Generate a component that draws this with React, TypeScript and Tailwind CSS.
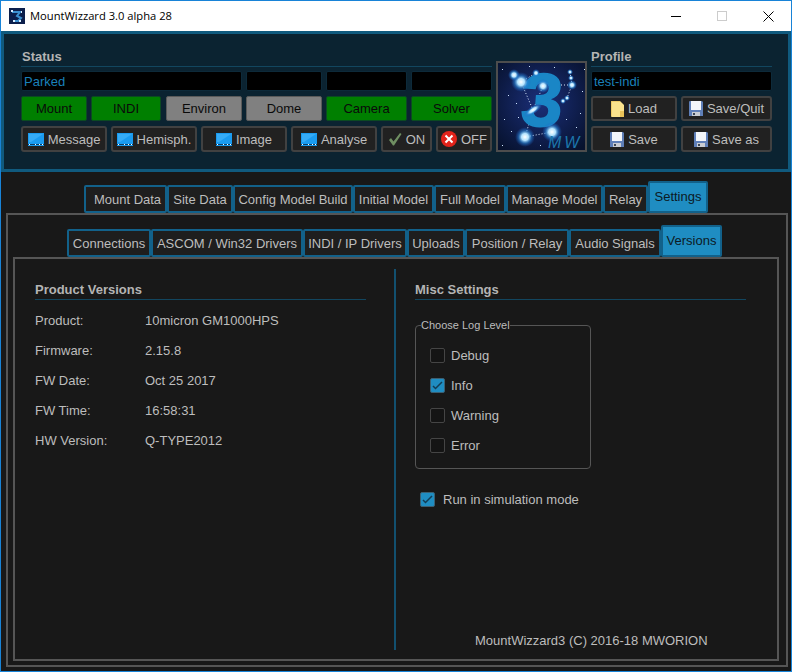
import { ReactNode } from "react";

const mainTabs = [
  { label: "Mount Data", width: "w-[83px] pl-[4px]" },
  { label: "Site Data", width: "w-[66px]" },
  { label: "Config Model Build", width: "w-[120px]" },
  { label: "Initial Model", width: "w-[81px]" },
  { label: "Full Model", width: "w-[72px]" },
  { label: "Manage Model", width: "w-[97px]" },
  { label: "Relay", width: "w-[45px]" },
];

const subTabs = [
  { label: "Connections", width: "w-[84px]" },
  { label: "ASCOM / Win32 Drivers", width: "w-[152px]" },
  { label: "INDI / IP Drivers", width: "w-[104px]" },
  { label: "Uploads", width: "w-[58px]" },
  { label: "Position / Relay", width: "w-[104px]" },
  { label: "Audio Signals", width: "w-[92px]" },
];

const versions = [
  ["Product:", "10micron GM1000HPS"],
  ["Firmware:", "2.15.8"],
  ["FW Date:", "Oct 25 2017"],
  ["FW Time:", "16:58:31"],
  ["HW Version:", "Q-TYPE2012"],
];

const stars = [
  [25, 21, 10],
  [18, 14, 6],
  [40, 12, 4],
  [47, 25, 7],
  [29, 76, 10],
  [56, 71, 10],
  [74, 11, 3],
  [76, 24, 5],
  [75, 17, 3],
  [71, 37, 3],
  [67, 40, 3],
];

const specks = [
  [6, 8], [12, 34], [8, 58], [20, 42], [33, 5], [58, 6], [86, 30], [84, 52], [70, 58],
  [15, 70], [44, 84], [6, 84], [62, 46], [80, 66], [36, 64], [52, 16], [22, 56], [88, 8],
];

function WindowIcon() {
  return (
    <svg width="16" height="13" viewBox="0 0 16 13" className="shrink-0">
      <rect width="16" height="13" fill="#1a9bf0" />
      <path d="M1 1H15L3 9H1Z" fill="#35abf6" />
      <rect x="0" y="11" width="16" height="1" fill="#0b3f66" />
      <rect x="1" y="11" width="1" height="1" fill="#fff" />
      <rect x="7" y="11" width="1" height="1" fill="#fff" />
      <rect x="11" y="11" width="1" height="1" fill="#fff" />
      <rect x="14" y="11" width="1" height="1" fill="#fff" />
    </svg>
  );
}

function FloppyIcon() {
  return (
    <svg width="14" height="15" viewBox="0 0 14 15" className="shrink-0">
      <path d="M0 1Q0 0 1 0H13L14 1V15H0Z" fill="#5f7fb8" />
      <rect x="2" y="0" width="10" height="9" fill="#f4f6fa" />
      <rect x="3" y="11" width="8" height="4" fill="#c9ccd2" />
      <rect x="4" y="12" width="2" height="2" fill="#3c4656" />
    </svg>
  );
}

function FolderIcon() {
  return (
    <svg width="13" height="16" viewBox="0 0 13 16" className="shrink-0">
      <path d="M0 1Q0 0 1 0H9L13 4V16H1Q0 16 0 15Z" fill="#fbe38d" />
      <path d="M9 10H13V16H9Z" fill="#e9c35a" />
      <path d="M0 1Q0 0 1 0H9V1H1V15H0Z" fill="#f0cc69" />
    </svg>
  );
}

function CheckIcon() {
  return (
    <svg width="14" height="14" viewBox="0 0 14 14" className="shrink-0">
      <path d="M1 8L3 6L5.5 9.5L12 1L13.5 2L6 13.5H5Z" fill="#6f8f62" />
    </svg>
  );
}

function CrossIcon() {
  return (
    <svg width="16" height="16" viewBox="0 0 16 16" className="shrink-0">
      <circle cx="8" cy="8" r="8" fill="#e2231a" />
      <path d="M4.5 4.5L11.5 11.5M11.5 4.5L4.5 11.5" stroke="#fff" strokeWidth="2" />
    </svg>
  );
}

function Logo() {
  return (
    <div className="w-[91px] h-[91px] border-2 border-[#4d4d4d] bg-[#0b1a44] shrink-0 ml-[4px] self-end overflow-visible">
      <svg width="87" height="87" viewBox="2 2 87 87" className="block overflow-visible">
        <defs>
          <radialGradient id="sky" cx="50%" cy="45%" r="70%">
            <stop offset="0%" stopColor="#1b2f7a" />
            <stop offset="100%" stopColor="#07122e" />
          </radialGradient>
          <radialGradient id="glow">
            <stop offset="0%" stopColor="#ffffff" />
            <stop offset="35%" stopColor="#b4e4ff" />
            <stop offset="65%" stopColor="#2a86d8" stopOpacity="0.6" />
            <stop offset="100%" stopColor="#1a5bc0" stopOpacity="0" />
          </radialGradient>
        </defs>
        <rect x="2" y="2" width="87" height="87" fill="url(#sky)" />
        {specks.map(([x, y]) => (
          <rect key={`${x}-${y}`} x={x} y={y} width="1" height="1" fill="#cfe6ff" />
        ))}
        <path
          d="M25 21L40 12M25 21L37 49L47 25M37 49L29 76L56 71M74 11L76 24L71 37M56 24H76"
          stroke="#dcecff"
          strokeWidth="1"
          strokeDasharray="1 2"
          fill="none"
        />
        <text
          x="24"
          y="65"
          fontFamily="Liberation Sans"
          fontWeight="700"
          fontSize="75"
          fill="#1a86c6"
          stroke="#1a86c6"
          strokeWidth="1.5"
          transform="skewX(-4) translate(4 0)"
        >
          3
        </text>
        <ellipse cx="37" cy="49" rx="11" ry="4" transform="rotate(-35 37 49)" fill="url(#glow)" />
        {stars.map(([x, y, r]) => (
          <circle key={`${x}-${y}`} cx={x} cy={y} r={r} fill="url(#glow)" />
        ))}
        <text
          x="52"
          y="87"
          fontFamily="Liberation Sans"
          fontStyle="italic"
          fontSize="16"
          letterSpacing="3"
          fill="#1c76ab"
        >
          MW
        </text>
      </svg>
    </div>
  );
}

function Tab({ label, width }: { label: string; width: string }) {
  return (
    <div className={`${width} h-[28px] pt-[1px] flex items-center justify-center border-2 border-[#12618a] rounded-[2px] text-[#bdbdbd] bg-[#1e1e1e] whitespace-nowrap`}>
      {label}
    </div>
  );
}

function ActiveTab({ label, width }: { label: string; width: string }) {
  return (
    <div className={`${width} h-[32px] flex items-center justify-center border-2 border-[#12618a] rounded-[2px] text-[#0c1a24] bg-[#1f8dc2] whitespace-nowrap`}>
      {label}
    </div>
  );
}

function StatusField({ width, children }: { width: string; children?: ReactNode }) {
  return (
    <div className={`${width} h-[20px] pt-[1px] bg-black border border-[#0d2a3a] rounded-[2px] pl-[2px] flex items-center text-[#1a80ba]`}>
      {children}
    </div>
  );
}

function Lamp({ label, width, on }: { label: string; width: string; on: boolean }) {
  return (
    <div
      className={`${width} h-[25px] pt-[1px] flex items-center justify-center border rounded-[2px] text-[#0a0a0a] ${
        on ? "bg-[#007f00] border-[#0b4a22]" : "bg-[#808080] border-[#5a5a5a]"
      }`}
    >
      {label}
    </div>
  );
}

function ActionButton({
  label,
  width,
  height = "h-[26px]",
  icon,
}: {
  label: string;
  width: string;
  height?: string;
  icon: ReactNode;
}) {
  return (
    <div className={`${width} ${height} flex items-center justify-center gap-[4px] border-2 border-[#414141] rounded-[3px] bg-[#212121] text-[#bdbdbd] whitespace-nowrap`}>
      {icon}
      <span className="pt-[1px]">{label}</span>
    </div>
  );
}

function SectionTitle({ children, width }: { children: ReactNode; width: string }) {
  return (
    <div className={`${width} h-[17px] border-b border-[#12465f] font-bold text-[#b4b4b4] leading-[14px]`}>
      {children}
    </div>
  );
}

function Check({ label, checked, gap = "gap-[6px]" }: { label: string; checked?: boolean; gap?: string }) {
  return (
    <div className={`h-[30px] flex items-center ${gap} text-[#bdbdbd]`}>
      <div
        className={`w-[15px] h-[15px] rounded-[2px] border flex items-center justify-center ${
          checked ? "bg-[#1f8dc2] border-[#3b5f72]" : "bg-[#141414] border-[#454545]"
        }`}
      >
        {checked && (
          <svg width="11" height="9" viewBox="0 0 11 9">
            <path d="M1 5L3.5 7.5L10 1" stroke="#123d55" strokeWidth="1.5" fill="none" />
          </svg>
        )}
      </div>
      <span className="pt-[1px]">{label}</span>
    </div>
  );
}

export default function App() {
  return (
    <div className="w-[792px] h-[672px] flex flex-col border border-[#1883d7] bg-[#181818] font-['Liberation_Sans',sans-serif] text-[13px] overflow-hidden">
      {/* Title bar */}
      <div className="h-[30px] shrink-0 bg-white flex items-center pl-[8px]">
        <svg width="16" height="16" viewBox="0 0 16 16" className="shrink-0">
          <rect width="16" height="16" fill="#0c1f4c" />
          <path d="M3 4H11L8 8L12 10L9 13H4" stroke="#3c8fd0" strokeWidth="2" fill="none" />
          <rect x="2" y="2" width="2" height="2" fill="#d8eeff" />
          <rect x="12" y="3" width="1" height="2" fill="#d8eeff" />
          <rect x="4" y="12" width="2" height="2" fill="#d8eeff" />
          <rect x="10" y="12" width="2" height="2" fill="#d8eeff" />
        </svg>
        <span className="ml-[5px] text-[11.2px] text-black font-['Open_Sans',sans-serif]">MountWizzard 3.0 alpha 28</span>
        <div className="ml-auto flex items-center">
          <div className="w-[46px] h-[30px] flex items-center justify-center">
            <div className="w-[10px] h-px bg-black" />
          </div>
          <div className="w-[46px] h-[30px] flex items-center justify-center">
            <div className="w-[10px] h-[10px] border border-[#cccccc]" />
          </div>
          <div className="w-[46px] h-[30px] flex items-center justify-center">
            <svg width="11" height="11" viewBox="0 0 11 11">
              <path d="M0.5 0.5L10.5 10.5M10.5 0.5L0.5 10.5" stroke="#000" strokeWidth="1" />
            </svg>
          </div>
        </div>
      </div>

      {/* Status / profile panel */}
      <div className="h-[141px] shrink-0 bg-[#0b2331] border-[3px] border-[#105a7e] pl-[17px] pt-[16px] flex">
        <div className="w-[471px] flex flex-col">
          <SectionTitle width="w-full"><span className="pl-[1px]">Status</span></SectionTitle>
          <div className="flex gap-[4px] mt-[4px]">
            <StatusField width="w-[221px]">Parked</StatusField>
            <StatusField width="w-[76px]" />
            <StatusField width="w-[81px]" />
            <StatusField width="w-[81px]" />
          </div>
          <div className="flex mt-[5px]">
            <Lamp label="Mount" width="w-[66px]" on />
            <div className="ml-[4px]"><Lamp label="INDI" width="w-[70px]" on /></div>
            <div className="ml-[5px]"><Lamp label="Environ" width="w-[76px]" on={false} /></div>
            <div className="ml-[4px]"><Lamp label="Dome" width="w-[76px]" on={false} /></div>
            <div className="ml-[4px]"><Lamp label="Camera" width="w-[81px]" on /></div>
            <div className="ml-[4px]"><Lamp label="Solver" width="w-[81px]" on /></div>
          </div>
          <div className="flex gap-[4px] mt-[5px]">
            <ActionButton label="Message" width="w-[86px]" icon={<WindowIcon />} />
            <ActionButton label="Hemisph." width="w-[86px]" icon={<WindowIcon />} />
            <ActionButton label="Image" width="w-[86px]" icon={<WindowIcon />} />
            <ActionButton label="Analyse" width="w-[86px]" icon={<WindowIcon />} />
            <ActionButton label="ON" width="w-[51px]" icon={<CheckIcon />} />
            <ActionButton label="OFF" width="w-[56px]" icon={<CrossIcon />} />
          </div>
        </div>
        <div className="h-[102px] flex">
          <Logo />
        </div>
        <div className="w-[181px] ml-[4px] flex flex-col">
          <SectionTitle width="w-full">Profile</SectionTitle>
          <div className="mt-[4px]">
            <StatusField width="w-full">test-indi</StatusField>
          </div>
          <div className="flex gap-[4px] mt-[5px]">
            <ActionButton label="Load" width="w-[86px]" height="h-[25px]" icon={<FolderIcon />} />
            <ActionButton label="Save/Quit" width="w-[91px]" height="h-[25px]" icon={<FloppyIcon />} />
          </div>
          <div className="flex gap-[4px] mt-[5px]">
            <ActionButton label="Save" width="w-[86px]" icon={<FloppyIcon />} />
            <ActionButton label="Save as" width="w-[91px]" icon={<FloppyIcon />} />
          </div>
        </div>
      </div>

      {/* Main tabs */}
      <div className="h-[41px] shrink-0 flex items-end pl-[83px]">
        {mainTabs.map((t) => (
          <Tab key={t.label} label={t.label} width={t.width} />
        ))}
        <ActiveTab label="Settings" width="w-[60px]" />
      </div>

      <div className="ml-[5px] w-[782px] h-[454px] border-2 border-[#555555] flex flex-col">
        {/* Sub tabs */}
        <div className="h-[42px] shrink-0 flex items-end pl-[59px]">
          {subTabs.map((t) => (
            <Tab key={t.label} label={t.label} width={t.width} />
          ))}
          <ActiveTab label="Versions" width="w-[61px]" />
        </div>

        <div className="ml-[5px] w-[766px] h-[404px] border-2 border-[#555555] pt-[10px] pb-[9px] flex">
          <div className="w-[379px] pl-[20px] pt-[14px]">
            <SectionTitle width="w-[331px]">Product Versions</SectionTitle>
            <div className="mt-[6px]">
              {versions.map(([name, value]) => (
                <div key={name} className="h-[30px] flex items-center text-[#bdbdbd]">
                  <span className="w-[110px]">{name}</span>
                  <span>{value}</span>
                </div>
              ))}
            </div>
          </div>

          <div className="w-[2px] bg-[#12506f]" />

          <div className="flex-1 pl-[19px] pt-[14px] flex flex-col">
            <SectionTitle width="w-[331px]">Misc Settings</SectionTitle>
            <fieldset className="w-[176px] h-[151px] mt-[18px] border border-[#555555] rounded-[4px]">
              <legend className="ml-[5px] text-[11px] leading-[14px] text-[#bdbdbd]">Choose Log Level</legend>
              <div className="pt-[8px] pl-[14px]">
                <Check label="Debug" />
                <Check label="Info" checked />
                <Check label="Warning" />
                <Check label="Error" />
              </div>
            </fieldset>
            <div className="mt-[15px] pl-[5px]">
              <Check label="Run in simulation mode" checked gap="gap-[8px]" />
            </div>
            <div className="mt-auto mb-[1px] pl-[60px] leading-[16px] text-[#bdbdbd]">
              MountWizzard3 (C) 2016-18 MWORION
            </div>
          </div>
        </div>
      </div>
    </div>
  );
}
